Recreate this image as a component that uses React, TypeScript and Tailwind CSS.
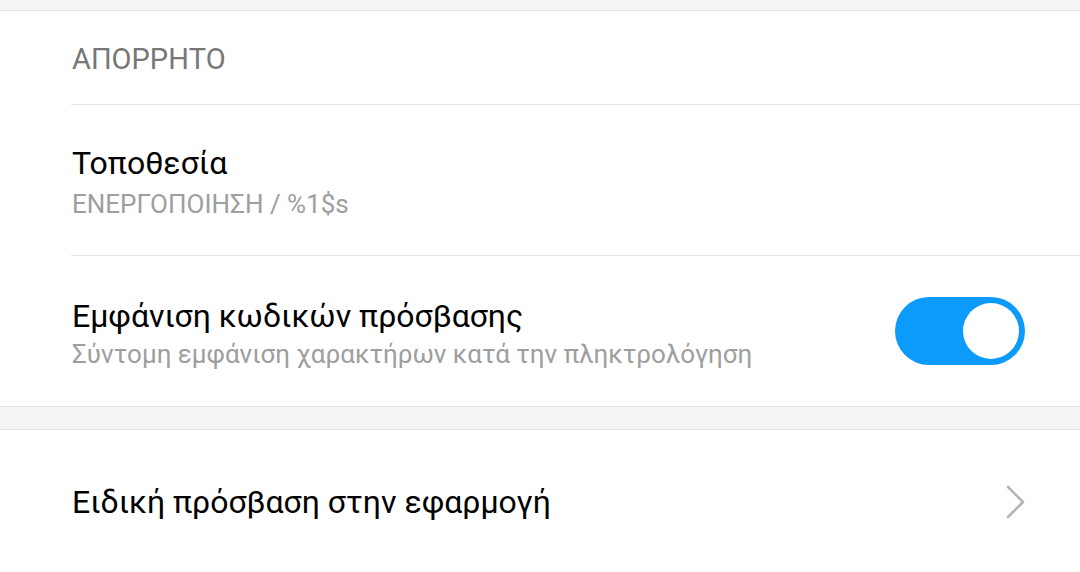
import React from "react";

function Toggle({ on }: { on: boolean }) {
  return (
    <div className={`w-[130px] h-[68px] rounded-full p-[6px] flex items-center ${on ? "bg-[#0d9bfb] justify-end" : "bg-gray-300 justify-start"}`}>
      <div className="w-[56px] h-[56px] rounded-full bg-white" />
    </div>
  );
}

function Chevron() {
  return (
    <svg width="20" height="34" viewBox="0 0 20 34" fill="none">
      <path d="M2 2 L17 17 L2 32" stroke="#b5b5b5" strokeWidth="2.6" strokeLinecap="round" strokeLinejoin="round" />
    </svg>
  );
}

export default function App() {
  return (
    <div className="w-[1080px] h-[572px] overflow-hidden bg-white font-['Roboto',sans-serif]">
      <div className="h-[11px] bg-[#f5f5f5] border-b border-[#e3e3e3]" />

      <div className="h-[93px] pl-[72px] flex items-center">
        <span className="text-[29px] text-[#777777] pt-[4px]">ΑΠΟΡΡΗΤΟ</span>
      </div>
      <div className="ml-[71px] border-t border-[#e3e3e3]" />

      <div className="h-[150px] pl-[72px] pt-[3px] flex flex-col justify-center">
        <div className="text-[32px] text-black leading-[40px]">Τοποθεσία</div>
        <div className="text-[26px] text-[#9e9e9e] leading-[32px] mt-[5px]">ΕΝΕΡΓΟΠΟΙΗΣΗ / %1$s</div>
      </div>
      <div className="ml-[71px] border-t border-[#e3e3e3]" />

      <div className="h-[150px] pl-[72px] pr-[55px] flex items-center justify-between">
        <div className="flex flex-col pt-[4px]">
          <div className="text-[32px] text-black leading-[40px]">Εμφάνιση κωδικών πρόσβασης</div>
          <div className="text-[26px] text-[#9e9e9e] leading-[32px] mt-[2px]">Σύντομη εμφάνιση χαρακτήρων κατά την πληκτρολόγηση</div>
        </div>
        <Toggle on />
      </div>

      <div className="h-[24px] bg-[#f5f5f5] border-y border-[#e3e3e3]" />

      <div className="h-[144px] pl-[72px] pr-[54px] flex items-center justify-between">
        <div className="text-[32px] text-black leading-[40px]">Ειδική πρόσβαση στην εφαρμογή</div>
        <Chevron />
      </div>
    </div>
  );
}
